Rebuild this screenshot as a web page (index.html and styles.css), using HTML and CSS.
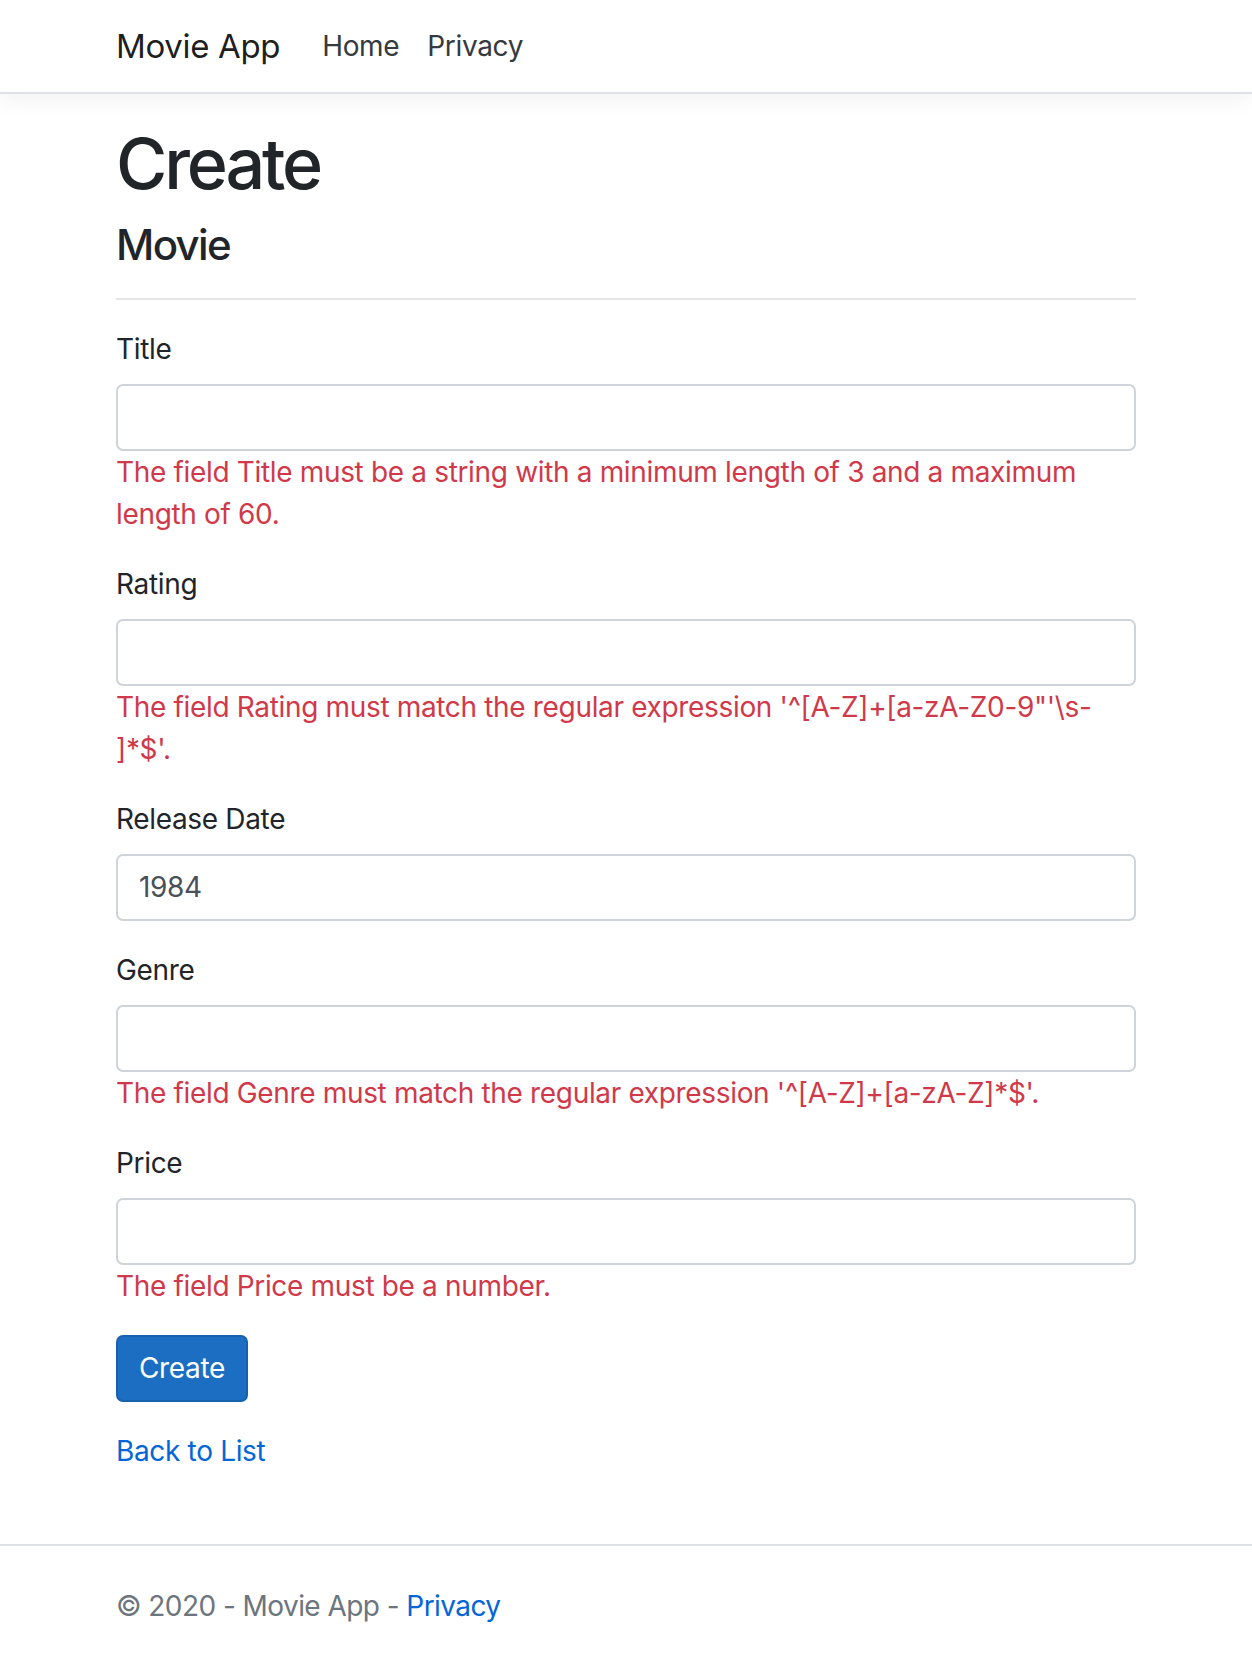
FILE: index.html
```html
<!DOCTYPE html>
<html lang="en">
<head>
<meta charset="utf-8">
<title>Create - Movie App</title>
<link rel="stylesheet" href="styles.css">
</head>
<body>
<header>
  <nav class="navbar">
    <div class="container nav-inner">
      <a class="brand" href="#">Movie App</a>
      <ul class="nav-list">
        <li><a class="nav-link" href="#">Home</a></li>
        <li><a class="nav-link" href="#">Privacy</a></li>
      </ul>
    </div>
  </nav>
</header>
<div class="container page">
  <main class="main">
    <h1 class="title">Create</h1>
    <h4 class="subtitle">Movie</h4>
    <hr class="divider">
    <form class="form">
      <div class="form-group">
        <label class="control-label">Title</label>
        <input class="form-control" type="text">
        <span class="text-danger">The field Title must be a string with a minimum length of 3 and a maximum length of 60.</span>
      </div>
      <div class="form-group">
        <label class="control-label">Rating</label>
        <input class="form-control" type="text">
        <span class="text-danger">The field Rating must match the regular expression '^[A-Z]+[a-zA-Z0-9"'\s-<wbr>]*$'.</span>
      </div>
      <div class="form-group">
        <label class="control-label">Release Date</label>
        <input class="form-control" type="text" value="1984">
      </div>
      <div class="form-group">
        <label class="control-label">Genre</label>
        <input class="form-control" type="text">
        <span class="text-danger">The field Genre must match the regular expression '^[A-Z]+[a-zA-Z]*$'.</span>
      </div>
      <div class="form-group">
        <label class="control-label">Price</label>
        <input class="form-control" type="text">
        <span class="text-danger">The field Price must be a number.</span>
      </div>
      <div class="form-group">
        <button class="btn-primary" type="button">Create</button>
      </div>
    </form>
    <div class="back">
      <a class="link" href="#">Back to List</a>
    </div>
  </main>
</div>
<footer class="footer">
  <div class="container">
    &copy; 2020 - Movie App - <a class="link" href="#">Privacy</a>
  </div>
</footer>
</body>
</html>
```

FILE: styles.css
```css
html {
  font-size: 28px;
}

* {
  box-sizing: border-box;
}

body {
  margin: 0;
  min-height: 100vh;
  display: flex;
  flex-direction: column;
  font-family: Inter, "Noto Sans", "Liberation Sans", sans-serif;
  font-size: 1rem;
  line-height: 1.5;
  letter-spacing: -0.012em;
  color: #212529;
  background: #fff;
}

.container {
  width: 100%;
  max-width: 1080px;
  margin: 0 auto;
  padding: 0 30px;
}

a {
  text-decoration: none;
}

.link {
  color: #0366d6;
}

/* navbar */
.navbar {
  background: #fff;
  border-bottom: 2px solid #dee2e6;
  box-shadow: 0 0.25rem 0.75rem rgba(0, 0, 0, 0.05);
  padding: 0.5rem 0;
  margin-bottom: 1rem;
}

.nav-inner {
  display: flex;
  align-items: center;
}

.brand {
  font-size: 33px;
  line-height: 46px;
  padding: 0.3125rem 0;
  margin-right: 1rem;
  color: rgba(0, 0, 0, 0.9);
}

.nav-list {
  display: flex;
  list-style: none;
  margin: 0;
  padding: 0;
}

.nav-link {
  display: block;
  padding: 0 0.5rem;
  color: #343a40;
}

/* main */
.page {
  flex: 1 0 auto;
}

.main {
  padding-bottom: 1rem;
}

.title {
  margin: 0 0 0.5rem;
  font-size: 2.5rem;
  font-weight: 500;
  line-height: 1.2;
  letter-spacing: -0.045em;
}

.subtitle {
  margin: 0 0 0.5rem;
  font-size: 1.5rem;
  font-weight: 500;
  line-height: 1.2;
  letter-spacing: -0.04em;
}

.divider {
  margin: 1rem 0;
  border: 0;
  border-top: 2px solid rgba(0, 0, 0, 0.1);
  height: 0;
}

.form {
  margin: 0;
}

.form-group {
  margin-bottom: 1rem;
}

.control-label {
  display: block;
  margin-bottom: 0.5rem;
}

.form-control {
  display: block;
  width: 100%;
  height: calc(1.5em + 0.75rem + 4px);
  padding: 0.375rem 0.75rem;
  font-family: inherit;
  font-size: 1rem;
  line-height: 1.5;
  letter-spacing: inherit;
  color: #495057;
  background: #fff;
  border: 2px solid #ced4da;
  border-radius: 0.25rem;
  outline: none;
}

.text-danger {
  display: block;
  color: #d0394a;
}

.btn-primary {
  display: inline-block;
  padding: 0.375rem 0.75rem;
  font-family: inherit;
  font-size: 1rem;
  line-height: 1.5;
  font-weight: 400;
  letter-spacing: inherit;
  color: #fff;
  background: #1b6ec2;
  border: 2px solid #1861ac;
  border-radius: 0.25rem;
}

/* footer */
.footer {
  border-top: 2px solid #dee2e6;
  line-height: 120px;
  white-space: nowrap;
  color: #6c757d;
  letter-spacing: -0.02em;
}
```
